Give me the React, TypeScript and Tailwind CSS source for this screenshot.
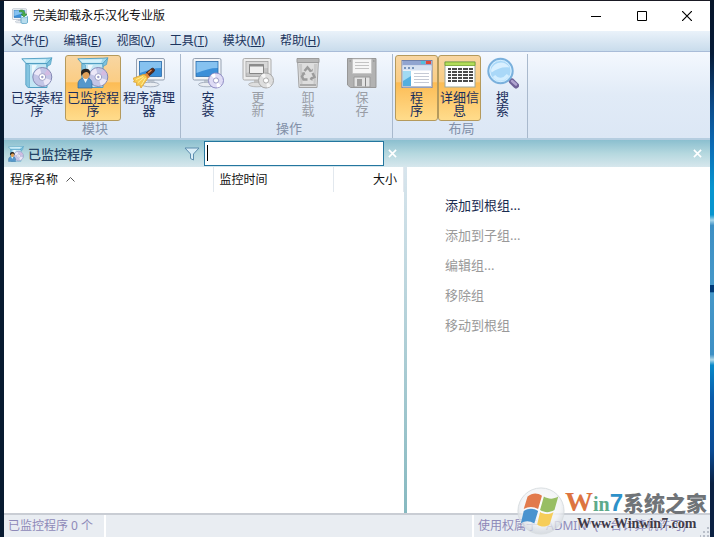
import React from "react";

type IconProps = { className?: string };

function SoftwareBoxIcon({ person = false, className = "size-8" }: IconProps & { person?: boolean }) {
  return (
    <svg viewBox="0 0 32 32" className={className} aria-hidden="true">
      <path d="M5 6h21v24.500H7L5 28z" fill="#b4deef" stroke="#4f9dc2" />
      <path d="M5 6.500 8.500 8v22.500H7L5 28z" fill="#84c4e0" stroke="#5aa5c8" strokeWidth=".6" />
      <path d="M9 8h16v22H9z" fill="#c3e6f4" />
      <path d="m11 8 5 0-5 10z" fill="#ecf8fd" />
      <path d="M5 6.500.8 1.800 26 1.200 31 .8l-5 5.700z" fill="#a3daee" stroke="#4f9dc2" strokeWidth=".9" />
      <path d="m2.500 2.600 22.800-.4-1.300 3.500H5.600z" fill="#d5f1fa" />
      <path d="m26 6.500 4.800-5.500-1.300 6.500-3.500 2z" fill="#7dc2de" stroke="#4f9dc2" strokeWidth=".7" />
      <path d="m5 6.500 21 0" stroke="#4f9dc2" strokeWidth=".9" />
      <circle cx="21.300" cy="20" r="9.500" fill="#c3c5e6" stroke="#8488b4" />
      <path d="M21.300 20 13 17a9 9 0 0 1 6-5.500zM21.300 20l8.500 3a9 9 0 0 1-6 5.500z" fill="#ece8f8" />
      <path d="m21.300 20 5-7.300a9 9 0 0 1 3.500 4.600z" fill="#d4bbe2" />
      <circle cx="21.300" cy="20" r="3.400" fill="#fff" stroke="#8d8fbb" strokeWidth=".8" />
      <circle cx="21.300" cy="20" r="1.200" fill="#9ea0c8" />
      {person && (
        <g>
          <path d="M1 31v-4c0-4 3-6 7.500-6s6.500 2 6.500 6v4z" fill="#5597cb" stroke="#2f6a9c" strokeWidth=".7" />
          <path d="m6 21 2.500 5 2.500-5z" fill="#eef7fc" />
          <ellipse cx="8.800" cy="17.500" rx="3.600" ry="4.600" fill="#dfa057" />
          <path d="M4.600 19c-1.500-5 .2-7 4.200-7.200 3.600-.2 5.200 2.600 4.200 7.200-.7-2.600-1.600-3.600-3-4-2-.3-4 1-5.400 4z" fill="#27221f" />
        </g>
      )}
    </svg>
  );
}

function Monitor({ gray = false }: { gray?: boolean }) {
  const edge = gray ? "#acacac" : "#95a1b2";
  return (
    <g>
      <path d="M12 23h7v4h-7z" fill={gray ? "#c5c5c5" : "#c5ccd6"} />
      <ellipse cx="15" cy="27.500" rx="8.500" ry="2.300" fill={gray ? "#dedede" : "#e9edf2"} stroke={edge} strokeWidth=".8" />
      <rect x="1" y="1.500" width="28" height="21.500" rx="1.500" fill={gray ? "#ededed" : "#f2f4f7"} stroke={edge} />
      <rect x="4" y="4.500" width="22" height="15" fill={gray ? "#c3c3c3" : "#3b8fd8"} stroke={gray ? "#a2a2a2" : "#2c6ca8"} strokeWidth=".8" />
      <path d="M4.500 5h21v6c-7 0-13 2-21 5z" fill={gray ? "#d8d8d8" : "#86c2f0"} />
      {gray && <path d="M7.500 7.500h14v9h-14z" fill="#f0f0f0" stroke="#858585" />}
      {gray && <path d="M7.500 7h14v2.500h-14z" fill="#8c8c8c" />}
    </g>
  );
}

function Disc({ gray = false }: { gray?: boolean }) {
  return (
    <g>
      <circle cx="24" cy="23.500" r="7.500" fill={gray ? "#dedede" : "#dfdcf5"} stroke={gray ? "#a6a6a6" : "#8e8bc4"} />
      <path d="m24 23.500-5-5.300a7 7 0 0 1 4-1.700zM24 23.500l5 5.300a7 7 0 0 1-4 1.700z" fill={gray ? "#f6f6f6" : "#fff"} />
      <circle cx="24" cy="23.500" r="2.600" fill="#fff" stroke={gray ? "#999" : "#8886b7"} strokeWidth=".8" />
    </g>
  );
}

function CleanerIcon() {
  return (
    <svg viewBox="0 0 32 32" className="size-8" aria-hidden="true">
      <g transform="translate(2.500 0)"><Monitor /></g>
      <path d="m13 16 5.500-4.500c2-1.200 4 1.300 2.500 3L16 19z" fill="#5d2c1b" stroke="#35190f" strokeWidth=".7" />
      <path d="m15 16 3.500-3" stroke="#e08a4c" strokeWidth="1.500" />
      <path d="m10 18 4-2 3 4-3 2z" fill="#e4863a" />
      <path d="M10 17.500-.5 21.500l2 1.500-1 2 3 .5v3l3-.5 1.500 3 6-8.500c1-2-1-5-4-5z" fill="#f6ca52" stroke="#d79b2b" strokeWidth=".7" />
      <path d="m3 22.500 7-3M5 25.500l6-5M8.500 28l4-7" stroke="#fff0a0" strokeWidth=".9" />
    </svg>
  );
}

function InstallIcon({ gray = false }: { gray?: boolean }) {
  return (
    <svg viewBox="0 0 32 32" className="size-8" aria-hidden="true">
      <Monitor gray={gray} />
      <Disc gray={gray} />
    </svg>
  );
}

function BinIcon() {
  return (
    <svg viewBox="0 0 32 32" className="size-8" aria-hidden="true">
      <path d="M5.500 3h21L25 30.500H7z" fill="#dedede" stroke="#a5a5a5" />
      <path d="M5 1.500h22v4H5z" fill="#b8b8b8" stroke="#9c9c9c" />
      <path d="M7 7h3l.5 20H8.500zM22 7h3l-1.500 20h-2z" fill="#c9c9c9" />
      <path d="m12.500 14 3-3.500 3.500 4M20.500 16l2 4-4 2M15.500 22.500h-4l-1.500-3 2-3.500" fill="none" stroke="#9c9c9c" strokeWidth="2.500" />
      <path d="m17 15 3.500-.5.500-3zM20 19.500 17.500 22l3 2zM9 16l3.500-1 1 3z" fill="#9c9c9c" />
      <path d="M8 28h16" stroke="#ababab" strokeWidth="2" />
    </svg>
  );
}

function FloppyIcon() {
  return (
    <svg viewBox="0 0 32 32" className="size-8" aria-hidden="true">
      <path d="M1.500 1.500h28.500v29H4.500L1.500 28z" fill="#b2b2b2" stroke="#979797" />
      <path d="M6.500 2h19v14.500h-19z" fill="#f6f6f6" stroke="#c2c2c2" strokeWidth=".7" />
      <path d="M9 5.500h14M9 8.500h14M9 11.500h14" stroke="#c3c3c3" />
      <path d="M8 20h16v10H8z" fill="#e3e3e3" stroke="#9a9a9a" />
      <path d="M11 22h5v7h-5z" fill="#a0a0a0" />
      <path d="M19.500 20.500v9M3.500 4H5M27 4h1.500" stroke="#858585" />
    </svg>
  );
}

function ProgramsIcon() {
  return (
    <svg viewBox="0 0 32 32" className="size-8" aria-hidden="true">
      <rect x="1" y="3.500" width="30" height="27" fill="#fff" stroke="#7080a8" />
      <path d="M1.500 4h29v4.500h-29z" fill="#91a4d0" />
      <path d="M20 4h4v3h-4z" fill="#53bddc" /><path d="M25 4h5v3h-5z" fill="#e0483b" />
      <path d="M1.500 8.500h29v5h-29z" fill="#d7e1f1" />
      <path d="M3 11h2M7 11h2M11 11h2" stroke="#5879a8" strokeWidth="1.500" />
      <path d="M2 14h8v16H2z" fill="#54afdf" /><path d="M2 14h8v5l-8 5z" fill="#a2daf3" />
      <path d="M13 16.500h15M13 19.500h15M13 22.500h15M13 25.500h15" stroke="#c5cad5" />
      <path d="M1.500 29h29v1.500h-29z" fill="#b8c1d2" />
    </svg>
  );
}

function DetailsIcon() {
  return (
    <svg viewBox="0 0 32 32" className="size-8" aria-hidden="true">
      <rect x="1" y="5" width="30" height="25" fill="#fff" stroke="#9ba89e" />
      <path d="M1 5h30v3.500H1z" fill="#b2dc5a" stroke="#71a02c" strokeWidth=".8" />
      {[12, 15, 18, 21, 24].map((y) => (
        <path key={y} d={`M4 ${y}h3m1 0h5m1 0h4m1 0h5m1 0h4`} stroke="#111" strokeWidth="1.500" />
      ))}
    </svg>
  );
}

function SearchIcon() {
  return (
    <svg viewBox="0 0 32 32" className="size-8" aria-hidden="true">
      <path d="m21 21 4 4" stroke="#8d98a8" strokeWidth="4" />
      <path d="m25 24.500 4 4" stroke="#6f6298" strokeWidth="6" strokeLinecap="round" />
      <path d="m25 24 4 3.500" stroke="#b0a4d0" strokeWidth="2.500" strokeLinecap="round" />
      <circle cx="13.500" cy="14" r="12.200" fill="#a9d8f8" stroke="#7ab0dc" strokeWidth="2" />
      <path d="M4 13C6 5 18 2 22.500 10.500c-7-1-12 1-18 5z" fill="#d9f0ff" />
      <path d="M7 19c4 5 10 4 14-1" fill="none" stroke="#d2eeff" strokeWidth="3" />
      <circle cx="13.500" cy="14" r="10.600" fill="none" stroke="#d7efff" />
    </svg>
  );
}

function AppIcon() {
  return (
    <svg viewBox="0 0 32 32" className="size-4" aria-hidden="true">
      <Monitor />
      <path d="M18 17h13v12c0 3-13 3-13 0z" fill="#b7dced" stroke="#4b9bc0" strokeWidth="1.500" />
      <ellipse cx="24.500" cy="17" rx="6.500" ry="2.500" fill="#e2f6fc" stroke="#4b9bc0" />
      <path d="M15 5c7-3 11 1 11 7h4l-6 6-6-6h4c0-4-3-5-7-4z" fill="#4aae49" stroke="#26772f" />
    </svg>
  );
}

type Tool = { label: string; icon: React.ReactNode; size: string; active?: boolean; disabled?: boolean };

const groups: { name: string; pad: string; tools: Tool[] }[] = [
  {
    name: "模块",
    pad: "pl-[5px] pr-[3px]",
    tools: [
      { label: "已安装程\n序", icon: <SoftwareBoxIcon />, size: "w-14" },
      { label: "已监控程\n序", icon: <SoftwareBoxIcon person />, size: "w-14", active: true },
      { label: "程序清理\n器", icon: <CleanerIcon />, size: "w-14" },
    ],
  },
  {
    name: "操作",
    pad: "pl-[2px] pr-px",
    tools: [
      { label: "安\n装", icon: <InstallIcon />, size: "w-[50px]" },
      { label: "更\n新", icon: <InstallIcon gray />, size: "w-[50px]", disabled: true },
      { label: "卸\n载", icon: <BinIcon />, size: "w-[50px]", disabled: true },
      { label: "保\n存", icon: <FloppyIcon />, size: "w-[58px]", disabled: true },
    ],
  },
  {
    name: "布局",
    pad: "pl-[2px] pr-[3px]",
    tools: [
      { label: "程\n序", icon: <ProgramsIcon />, size: "w-[43px]", active: true },
      { label: "详细信\n息", icon: <DetailsIcon />, size: "w-[43px]", active: true },
      { label: "搜\n索", icon: <SearchIcon />, size: "w-[43px]" },
    ],
  },
];

const menus = [["文件", "F"], ["编辑", "E"], ["视图", "V"], ["工具", "T"], ["模块", "M"], ["帮助", "H"]];
const actions = ["添加到根组...", "添加到子组...", "编辑组...", "移除组", "移动到根组"];

function ToolButton({ tool }: { tool: Tool }) {
  return (
    <button
      type="button"
      disabled={tool.disabled}
      aria-pressed={tool.active}
      className={`flex h-[66px] flex-col items-center rounded-[3px] border pt-px text-[13px] leading-[13px] ${tool.size} ${
        tool.active
          ? "border-[#b59a5c] bg-[linear-gradient(to_bottom,#f8d6a2,#fbcd84_40%,#fcbc55_42%,#ffdc8c)]"
          : "border-transparent"
      } ${tool.disabled ? "text-[#999da5]" : "text-[#1b2f5c]"}`}
    >
      {tool.icon}
      <span className="mt-[2px] whitespace-pre text-center">{tool.label}</span>
    </button>
  );
}

function Cross({ className }: IconProps) {
  return (
    <svg viewBox="0 0 10 10" className={className} aria-hidden="true">
      <path d="m1 1 8 8M9 1 1 9" fill="none" stroke="currentColor" strokeWidth="1.800" />
    </svg>
  );
}

function Watermark() {
  return (
    <div className="pointer-events-none absolute right-0 bottom-0 flex items-end pr-1">
      <svg viewBox="0 0 50 50" className="mb-[2px] size-12" aria-hidden="true">
        <defs>
          <radialGradient id="orb" cx=".5" cy=".4" r=".6">
            <stop offset="0" stopColor="#fff" />
            <stop offset=".7" stopColor="#f0f2f5" stopOpacity=".8" />
            <stop offset="1" stopColor="#cfd4da" stopOpacity=".7" />
          </radialGradient>
        </defs>
        <circle cx="25" cy="25" r="24" fill="url(#orb)" stroke="#d7dce0" />
        <path d="M11 10c5-4 10-4 15-1l-4 14c-5-3-10-3-15 0z" fill="#e27a4c" />
        <path d="M28 10c5 3 10 3 15 0l-4 14c-5 3-10 3-15 0z" fill="#98be64" />
        <path d="M7 25c5-3 10-3 15 0l-4 13c-5-3-10-3-14 0z" fill="#4a93cf" />
        <path d="M24 26c5 3 10 3 14 0l-4 13c-4 3-9 3-13 0z" fill="#f6cd5a" />
      </svg>
      <div className="flex w-[145px] flex-col">
        <div className="flex h-[26px] items-baseline whitespace-nowrap font-['Liberation_Serif','Noto_Sans_CJK_SC',serif] font-bold leading-[26px] [text-shadow:0_0_2px_white]">
          <span className="text-[28px] text-[#dd7440]">W</span>
          <span className="text-[20px] text-[#5eaa8b]">in</span>
          <span className="font-['Liberation_Sans',sans-serif] text-[24px] text-[#2e91c9]">7</span>
          <span className="font-['Noto_Sans_CJK_SC',sans-serif] text-[21px] font-black text-[#707478]">系统之家</span>
        </div>
        <div className="mb-1 h-[18px] pl-3 font-['Liberation_Serif',serif] text-[14px] font-bold leading-[18px] text-[#3f3b48] [text-shadow:0_0_2px_white]">
          Www.Winwin7.com
        </div>
      </div>
    </div>
  );
}

export default function App() {
  return (
    <div className="relative flex h-screen flex-col overflow-hidden bg-[linear-gradient(to_bottom,#061428_0%,#061b38_10%,#0c4d8c_20%,#0b6bb5_27%,#0795cf_35%,#0795cf_40%,#a9d7eb_41%,#3d8fc4_42%,#4598c9_53%,#003a78_53%,#003a78_54.4%,#4598c9_54.5%,#3d8fc4_66%,#b4dbea_67%,#0789c9_68%,#0a5cab_74%,#0b4b94_84%,#0b2142_90%,#0b2142_100%)] pr-1 font-['Noto_Sans','Noto_Sans_CJK_SC',sans-serif] text-[12px] leading-4 text-[#111]">
      <div className="flex min-h-0 grow border-t border-[#1a1a24] bg-[#071a30] pl-1">
        <main className="flex min-w-0 grow flex-col bg-white">
          <header className="flex h-[30px] shrink-0 items-center pl-2">
            <AppIcon />
            <h1 className="grow pl-[5px] text-[12px] leading-4">完美卸载永乐汉化专业版</h1>
            <button type="button" aria-label="最小化" className="flex h-full w-[46px] items-center justify-center">
              <svg viewBox="0 0 10 10" className="size-[10px]"><path d="M0 5.500h10" stroke="#000" /></svg>
            </button>
            <button type="button" aria-label="最大化" className="flex h-full w-[45px] items-center justify-center">
              <svg viewBox="0 0 10 10" className="size-[10px]"><path d="M.5.5h9v9h-9z" fill="none" stroke="#000" /></svg>
            </button>
            <button type="button" aria-label="关闭" className="flex h-full w-[46px] items-center justify-center">
              <svg viewBox="0 0 10 10" className="size-[10px]"><path d="m0 0 10 10M10 0 0 10" stroke="#000" strokeWidth="1.200" /></svg>
            </button>
          </header>

          <nav className="flex h-[21px] shrink-0 items-center gap-[15px] border-b border-[#a9bcd8] bg-linear-to-b from-[#eaf2fa] to-[#c9dcec] pl-[7px] text-[#1c355e]">
            {menus.map(([name, key]) => (
              <button type="button" key={key} className="whitespace-nowrap">
                {name}(<u>{key}</u>)
              </button>
            ))}
          </nav>

          <section className="flex h-[88px] shrink-0 border-b-2 border-[#b5cde0] bg-linear-to-b from-[#f4f8fe] via-[#e1ebf7] to-[#dce7f5] pt-[2px]">
            {groups.map((group) => (
              <div key={group.name} className={`flex flex-col border-r border-[#a9b9cd] pt-px ${group.pad}`}>
                <div className="flex">
                  {group.tools.map((tool) => (
                    <ToolButton key={tool.label} tool={tool} />
                  ))}
                </div>
                <div className="pl-1 text-center text-[13px] leading-[14px] text-[#8290a8]">{group.name}</div>
              </div>
            ))}
          </section>

          <section className="flex h-[27px] shrink-0 items-center bg-linear-to-b from-[#8bbfcf] via-[#b5d8df] to-[#d7e7ed]">
            <div className="flex w-[400px] items-center pl-1">
              <SoftwareBoxIcon person className="size-4" />
              <h2 className="grow pl-1 text-[13px] font-medium leading-4 text-[#254466]">已监控程序</h2>
              <svg viewBox="0 0 16 16" className="mr-1 size-4" aria-hidden="true">
                <path d="M1 2h14L9.500 8v6L6.500 12.500V8z" fill="#d9edf7" stroke="#5c8cae" />
              </svg>
              <div className="relative flex">
                <input
                  type="text"
                  aria-label="筛选"
                  className="peer h-[25px] w-[180px] border border-[#24769f] bg-white px-[3px] text-[13px] outline-none"
                />
                <span className="absolute top-1 left-[3px] h-4 w-px bg-black peer-focus:hidden" />
              </div>
              <button type="button" aria-label="清除筛选" className="flex w-5 justify-start pl-1 text-white">
                <Cross className="size-[9px]" />
              </button>
            </div>
            <button type="button" aria-label="关闭面板" className="mr-2 ml-auto text-white">
              <Cross className="size-[9px]" />
            </button>
          </section>

          <div className="flex min-h-0 grow">
            <section className="w-[400px] shrink-0">
              <table className="w-full table-fixed border-collapse">
                <thead>
                  <tr className="h-[25px] text-left">
                    <th className="w-[209px] border-r border-[#e2e8ee] pl-[6px] font-normal">
                      <span className="flex items-center gap-2">
                        程序名称
                        <svg viewBox="0 0 9 5" className="h-[5px] w-[9px]" aria-hidden="true">
                          <path d="M.5 4.500 4.500.5l4 4" fill="none" stroke="#555" />
                        </svg>
                      </span>
                    </th>
                    <th className="w-[120px] border-r border-[#e2e8ee] pl-[6px] font-normal">监控时间</th>
                    <th className="border-r border-[#e2e8ee] pr-[6px] text-right font-normal">大小</th>
                  </tr>
                </thead>
              </table>
            </section>
            <div className="w-[3px] shrink-0 bg-linear-to-b from-[#d8e5ed] to-[#86b9c0]" />
            <aside className="flex grow flex-col items-start gap-[9px] pt-[27px] pl-[38px] text-[13px] leading-5">
              {actions.map((action, index) => (
                <button
                  type="button"
                  key={action}
                  disabled={index > 0}
                  className={index > 0 ? "h-[21px] text-[#999]" : "h-[21px] text-[#1a2c50]"}
                >
                  {action}
                </button>
              ))}
            </aside>
          </div>

          <footer className="flex h-6 shrink-0 items-center border-t-2 border-[#c9cdd4] bg-[#e9edf2] text-[#8e89b8]">
            <span className="flex h-full w-[102px] items-center border-r-2 border-white pl-1">已监控程序 0 个</span>
            <span className="ml-auto flex h-full w-[238px] items-center border-l-2 border-white pl-1 whitespace-nowrap">
              使用权属于 "ADMIN" (一台计算机许可)
              <svg viewBox="0 0 10 10" className="ml-auto size-[10px] self-end" aria-hidden="true">
                <path d="M7 0h2v2H7zM7 4h2v2H7zM7 8h2v2H7zM3 4h2v2H3zM3 8h2v2H3zM0 8h1v2H0z" fill="#b9bfc9" />
              </svg>
            </span>
          </footer>
        </main>
      </div>
      <Watermark />
    </div>
  );
}
